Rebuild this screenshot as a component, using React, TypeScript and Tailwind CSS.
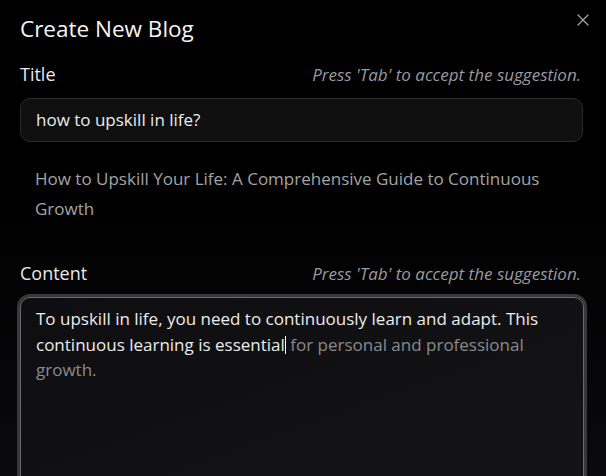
import React from "react";

export default function App() {
  return (
    <div className="relative h-[476px] w-[606px] overflow-hidden bg-gradient-to-b from-black via-[#020203] to-[#0b0b0d] font-['Open_Sans',sans-serif] text-white">
      <button className="absolute right-[17px] top-[14px] flex h-[12px] w-[12px] items-center justify-center text-[#a3a3a3]">
        <svg width="12" height="12" viewBox="0 0 12 12" fill="none" stroke="currentColor" strokeWidth="1.3" strokeLinecap="round">
          <path d="M1 1 L11 11 M11 1 L1 11" />
        </svg>
      </button>
      <div className="flex flex-col px-5 pt-[14px]">
        <h2 className="text-[22.5px] leading-[30px] font-medium text-[#f5f5f5]">Create New Blog</h2>

        <div className="mt-[18px] flex items-baseline justify-between">
          <span className="text-[18px] leading-[24px] font-medium text-[#e8e8e8]">Title</span>
          <span className="pr-[5px] text-[17px] italic leading-[24px] text-[#9a9aa0]">Press 'Tab' to accept the suggestion.</span>
        </div>

        <div className="mt-[11px] flex h-[44px] w-[563px] items-center rounded-[10px] border border-[#2b2b2b] bg-[#0f0f0f] px-[15px] text-[17px] text-[#ececec]">
          how to upskill in life?
        </div>

        <div className="mt-[22px] pl-[15px] text-[17px] leading-[30px] text-[#a3a3a3]">
          <div>How to Upskill Your Life: A Comprehensive Guide to Continuous</div>
          <div>Growth</div>
        </div>

        <div className="mt-[37px] flex items-baseline justify-between">
          <span className="text-[18px] leading-[24px] font-medium text-[#e8e8e8]">Content</span>
          <span className="pr-[5px] text-[17px] italic leading-[24px] text-[#9a9aa0]">Press 'Tab' to accept the suggestion.</span>
        </div>

        <div className="mt-[11px] h-[200px] w-[564px] rounded-[10px] border border-[#6a6a6a] bg-gradient-to-br from-[#0e0e10] to-[#141416] px-[15px] pt-[8px] text-[17px] leading-[25.5px] shadow-[0_0_0_3px_#38383a]">
          <div className="whitespace-nowrap text-[#ececec]">To upskill in life, you need to continuously learn and adapt. This</div>
          <div className="whitespace-nowrap">
            <span className="text-[#ececec]">continuous learning is essential</span>
            <span className="relative inline-block h-[18px] w-[1px] translate-y-[3px] bg-white align-baseline" />
            <span className="text-[#8a8a8e]"> for personal and professional</span>
          </div>
          <div className="text-[#8a8a8e]">growth.</div>
        </div>
      </div>
    </div>
  );
}
